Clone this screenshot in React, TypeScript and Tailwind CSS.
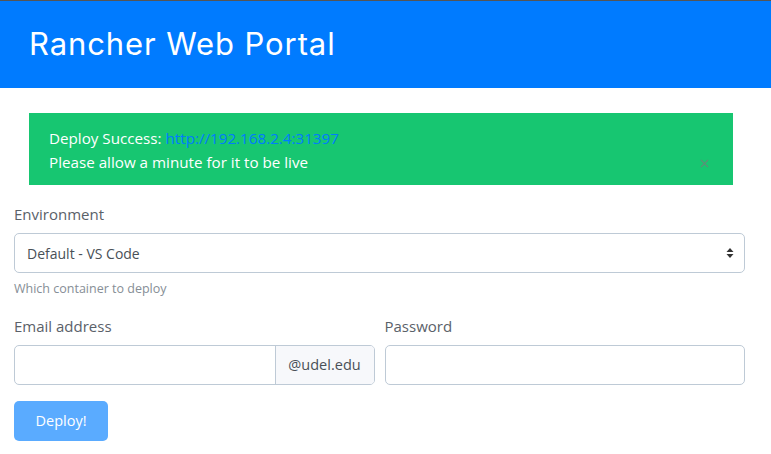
import { X } from 'lucide-react';

export default function App() {
  return (
    <div className="min-h-screen bg-white border-t border-[#555] font-['Open_Sans',sans-serif] text-[#5a6169]">
      <header className="bg-[#007bff] h-[87px] flex items-center px-[29px]">
        <h1 className="text-white text-[31px] font-['Inter',sans-serif] tracking-[0.9px]">Rancher Web Portal</h1>
      </header>

      <div className="pl-[14px] pr-[26px] pt-[25px]">
        <div className="ml-[15px] mr-[12px] bg-[#17c671] h-[72px] px-[20px] pt-[13px] relative text-[15.2px] text-white leading-[24px]">
          <p>
            Deploy Success: <a className="text-[#007bff]">http://192.168.2.4:31397</a>
          </p>
          <p>Please allow a minute for it to be live</p>
          <X size={13} strokeWidth={2} className="absolute right-[22px] top-[44px] text-[#5f8d78]" />
        </div>

        <div className="mt-[18px]">
          <label className="block text-[15px] leading-[22px]">Environment</label>
          <div className="mt-[8px] h-[40px] border border-[#becad6] rounded-[5px] flex items-center justify-between pl-[12px] pr-[10px] text-[14px] text-[#495057]">
            <span>Default - VS Code</span>
            <svg width="8" height="12" viewBox="0 0 8 12">
              <path d="M4 1 L7.5 5 H0.5 Z M4 11 L0.5 7 H7.5 Z" fill="#333" />
            </svg>
          </div>
          <p className="mt-[7px] text-[12.5px] text-[#868e96]">Which container to deploy</p>
        </div>

        <div className="mt-[16px] grid grid-cols-2 gap-[10px]">
          <div>
            <label className="block text-[15px] leading-[22px]">Email address</label>
            <div className="mt-[8px] h-[40px] flex border border-[#becad6] rounded-[5px] overflow-hidden">
              <div className="flex-1" />
              <div className="w-[99px] bg-[#f7f8fb] border-l border-[#becad6] flex items-center justify-center text-[14.5px] text-[#495057]">
                @udel.edu
              </div>
            </div>
          </div>
          <div>
            <label className="block text-[15px] leading-[22px]">Password</label>
            <div className="mt-[8px] h-[40px] border border-[#becad6] rounded-[5px]" />
          </div>
        </div>

        <button className="mt-[16px] w-[94px] h-[40px] rounded-[5px] bg-[#5aabff] text-white text-[14.5px]">
          Deploy!
        </button>
      </div>
    </div>
  );
}
